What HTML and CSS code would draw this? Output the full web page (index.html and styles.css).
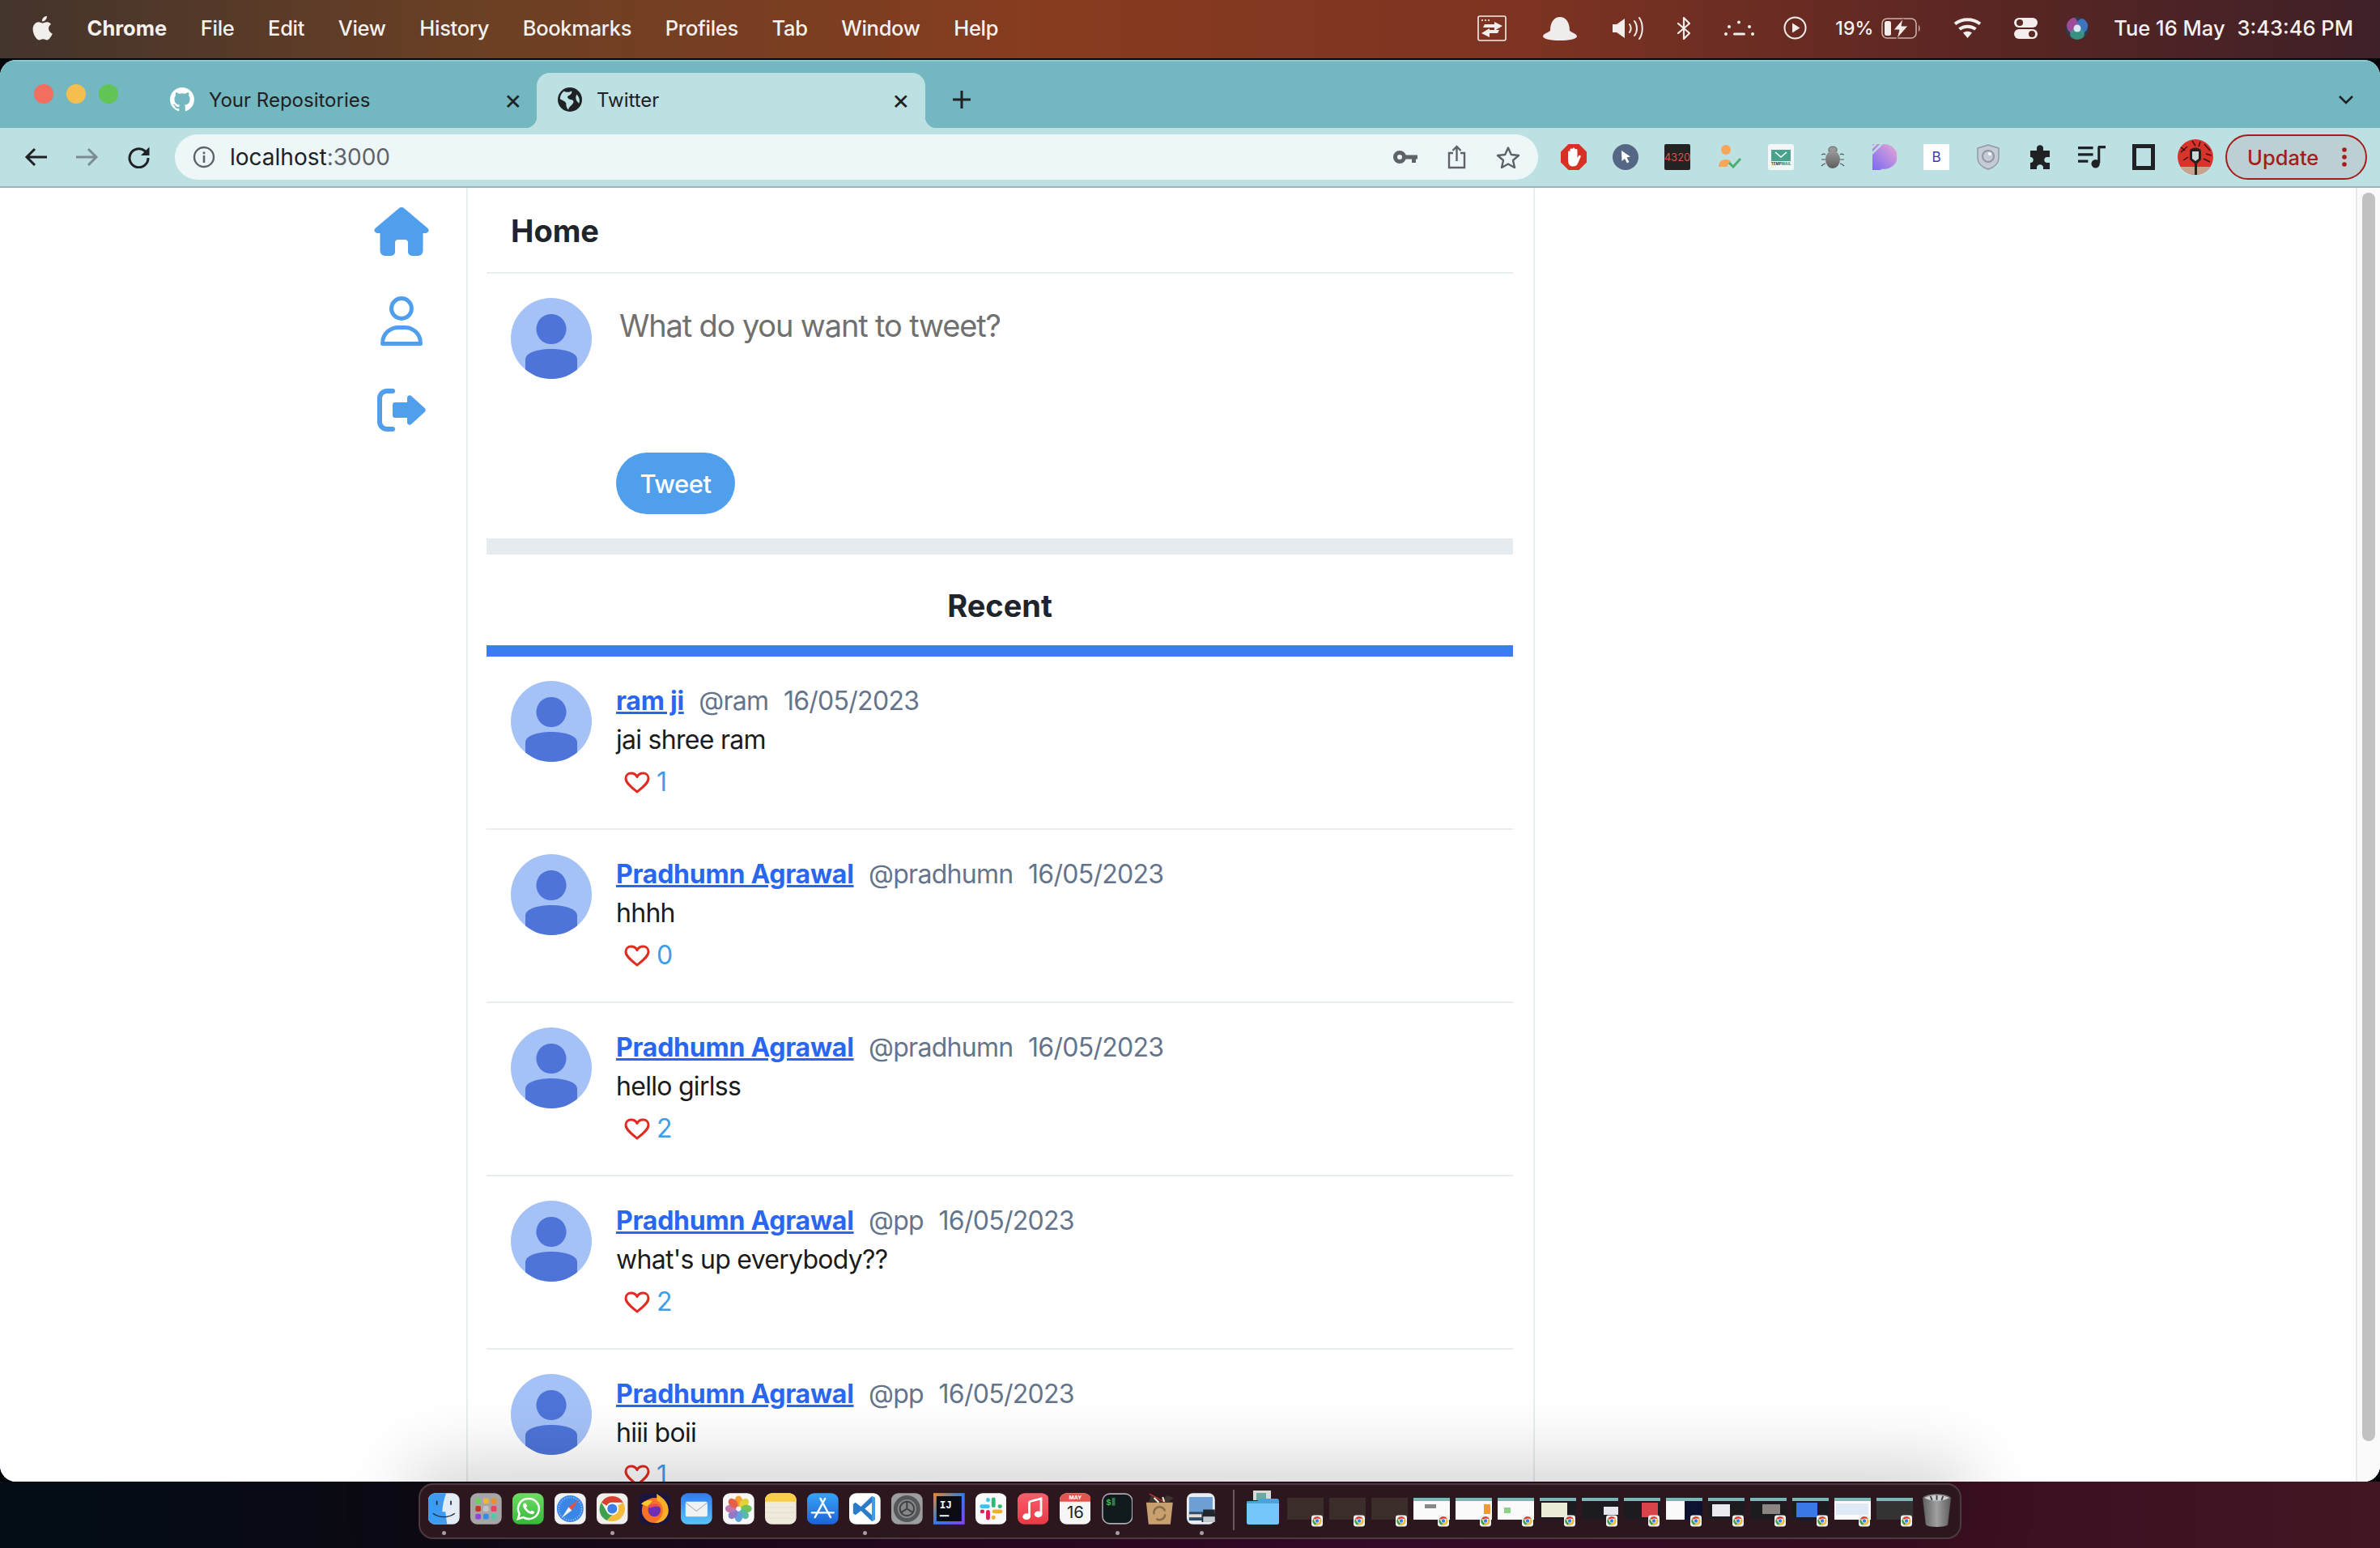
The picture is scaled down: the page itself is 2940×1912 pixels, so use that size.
FILE: index.html
```html
<!DOCTYPE html>
<html lang="en">
<head>
<meta charset="utf-8">
<title>Twitter</title>
<link rel="stylesheet" href="styles.css">
</head>
<body>
<svg class="sprite" aria-hidden="true">
  <defs>
    <clipPath id="av-clip"><circle cx="50" cy="50" r="50"/></clipPath>
    <clipPath id="siri-clip"><circle cx="14" cy="14" r="14"/></clipPath>
    <clipPath id="profile-clip"><circle cx="22" cy="22" r="22"/></clipPath>
    <linearGradient id="g-blue" x1="0" y1="0" x2="0" y2="1"><stop offset="0" stop-color="#2f7bf0"/><stop offset="1" stop-color="#5ac4fa"/></linearGradient>
    <linearGradient id="g-green" x1="0" y1="0" x2="0" y2="1"><stop offset="0" stop-color="#6fdc63"/><stop offset="1" stop-color="#35b83a"/></linearGradient>
    <linearGradient id="g-red" x1="0" y1="0" x2="0" y2="1"><stop offset="0" stop-color="#f4606c"/><stop offset="1" stop-color="#e83a45"/></linearGradient>
    <linearGradient id="g-store" x1="0" y1="0" x2="0" y2="1"><stop offset="0" stop-color="#37a3f5"/><stop offset="1" stop-color="#1c63d8"/></linearGradient>
    <linearGradient id="g-ij" x1="0" y1="0" x2="1" y2="1"><stop offset="0" stop-color="#f5871f"/><stop offset=".5" stop-color="#2b7fe8"/><stop offset="1" stop-color="#8a3ff0"/></linearGradient>
    <linearGradient id="g-p" x1="1" y1="0" x2="0" y2="1"><stop offset="0" stop-color="#eaa9d2"/><stop offset="1" stop-color="#7a68f5"/></linearGradient>
    <linearGradient id="g-bug" x1="0" y1="0" x2="0" y2="1"><stop offset="0" stop-color="#9a9a9a"/><stop offset="1" stop-color="#5e5e5e"/></linearGradient>
    <linearGradient id="g-trash" x1="0" y1="0" x2="1" y2="0"><stop offset="0" stop-color="#5f5f5f"/><stop offset=".5" stop-color="#a0a0a0"/><stop offset="1" stop-color="#5c5c5c"/></linearGradient>
    <symbol id="avatar" viewBox="0 0 100 100">
      <circle cx="50" cy="50" r="50" fill="#a5c2f7"/>
      <circle cx="50" cy="38.5" r="18.6" fill="#4e74d9"/>
      <path d="M18 76C18 68 32 63 50 63S82 68 82 76V100H18Z" fill="#4e74d9" clip-path="url(#av-clip)"/>
    </symbol>
    <symbol id="heart" viewBox="0 0 32 27">
      <path d="M16 25C10 20 2 14.500 2 8.500 2 4.500 5 2 8.500 2 11.500 2 14.500 3.500 16 6.500 17.500 3.500 20.500 2 23.500 2 27 2 30 4.500 30 8.500 30 14.500 22 20 16 25Z" fill="none" stroke="#e02b20" stroke-width="3" stroke-linejoin="round"/>
    </symbol>
    <symbol id="chrome" viewBox="0 0 40 40">
      <rect x="0" y="0" width="40" height="40" rx="9" fill="#f1efec"/>
      <path d="M20 4A16 16 0 0 1 33.900 12H20A8 8 0 0 0 13 16L6.100 12A16 16 0 0 1 20 4Z" fill="#d8402f"/>
      <path d="M6.100 12L13 24A8 8 0 0 0 20 28L13 35.000A16 16 0 0 1 6.100 12Z" fill="#3f9f4f"/>
      <path d="M33.900 12A16 16 0 0 1 20 36 16 16 0 0 1 13 35L20 28 27 24A8 8 0 0 0 27 16Z" fill="#f0bd3c"/>
      <circle cx="20" cy="20" r="8" fill="#fff"/><circle cx="20" cy="20" r="6.300" fill="#3d7fe8"/>
    </symbol>
  </defs>
</svg>

<header class="menubar">
  <nav class="menu">
    <svg class="apple" viewBox="0 0 22 28"><path d="M17 15.500C17 12.500 19.500 11.200 19.600 11.100 18.200 9.100 16 8.800 15.300 8.800 13.400 8.600 11.600 9.900 10.700 9.900 9.700 9.900 8.200 8.800 6.600 8.800 4.500 8.900 2.600 10.100 1.500 11.900-.7 15.700 1 21.300 3.100 24.400 4.200 25.900 5.400 27.600 7.100 27.500 8.700 27.500 9.300 26.500 11.200 26.500 13.100 26.500 13.600 27.500 15.300 27.500 17 27.400 18.100 26 19.100 24.400 20.400 22.700 20.900 20.900 21 20.800 20.900 20.800 17 19.300 17 15.500ZM13.800 6.400C14.700 5.300 15.300 3.900 15.100 2.400 13.900 2.500 12.300 3.200 11.400 4.300 10.600 5.200 9.900 6.700 10.100 8.100 11.500 8.200 12.900 7.400 13.800 6.400Z" fill="#f2eeec"/></svg>
    <span class="menu-app">Chrome</span>
    <span>File</span><span>Edit</span><span>View</span><span>History</span><span>Bookmarks</span><span>Profiles</span><span>Tab</span><span>Window</span><span>Help</span>
  </nav>
  <div class="status">
    <svg class="st-control" viewBox="0 0 36 32"><rect x="1" y="1" width="34" height="30" rx="2" fill="none" stroke="#f3eeec" stroke-width="1.600"/><circle cx="6" cy="6" r="1.100" fill="#f3eeec"/><circle cx="10" cy="6" r="1.100" fill="#f3eeec"/><circle cx="14" cy="6" r="1.100" fill="#f3eeec"/><path d="M21 11H9L7 15H21V19L31 13 21 8Z" fill="#f3eeec"/><path d="M15 18H27L25 22H15V27L5 22 15 16Z" fill="#f3eeec"/></svg>
    <svg class="st-hat" viewBox="0 0 42 30"><path d="M9 18C9 7 14 1 21 1S33 7 33 18C37 21 42 22 42 25 42 28 32 30 21 30S0 28 0 25C0 22 5 21 9 18Z" fill="#f0eceb"/></svg>
    <svg class="st-sound" viewBox="0 0 39 28"><path d="M0 9H5L15 2V26L5 19H0Z" fill="#f3eeec"/><path d="M21 9C23 12 23 16 21 19M27 5C31 10 31 18 27 23M33 1C38 8 38 20 33 27" fill="none" stroke="#f3eeec" stroke-width="2" stroke-linecap="round"/></svg>
    <svg class="st-bt" viewBox="0 0 19 28"><path d="M2 8L16 20 9 27V1L16 8 2 20" fill="none" stroke="#f3eeec" stroke-width="2.200" stroke-linejoin="round" stroke-linecap="round"/></svg>
    <svg class="st-dots" viewBox="0 0 37 20"><g fill="#f3eeec"><circle cx="18" cy="2.500" r="2"/><circle cx="6" cy="8" r="2"/><circle cx="31" cy="8" r="2"/><circle cx="2" cy="17" r="2"/><circle cx="35" cy="17" r="2"/><rect x="11" y="15.500" width="15" height="3" rx="1.500"/></g></svg>
    <svg class="st-play" viewBox="0 0 29 29"><circle cx="14.500" cy="14.500" r="13" fill="none" stroke="#f3eeec" stroke-width="2"/><path d="M11 8.500L20.500 14.500 11 20.500Z" fill="#f3eeec"/></svg>
    <span class="st-pct">19%</span>
    <svg class="st-batt" viewBox="0 0 49 26"><rect x="1" y="1" width="42" height="24" rx="6" fill="none" stroke="#c9b1a9" stroke-width="1.600"/><rect x="4" y="4" width="8" height="18" rx="2.500" fill="#f3eeec"/><path d="M46 9C48 10 48 16 46 17Z" fill="#c9b1a9"/><path d="M27 1L15 15H22L19 26 33 10H25Z" fill="#f3eeec" stroke="#6a2a22" stroke-width="1"/></svg>
    <svg class="st-wifi" viewBox="0 0 35 25"><path d="M17.500 25L12 18.500C15 16 20 16 23 18.500Z" fill="#f3eeec"/><path d="M7.500 14C13 9.500 22 9.500 27.500 14M2 7.500C10.500 0.500 24.500 0.500 33 7.500" fill="none" stroke="#f3eeec" stroke-width="4"/></svg>
    <svg class="st-cc" viewBox="0 0 29 26"><rect x="0" y="0" width="29" height="12" rx="6" fill="#f3eeec"/><circle cx="7" cy="6" r="4" fill="#5a2a25"/><rect x="0" y="14" width="29" height="12" rx="6" fill="#f3eeec"/><circle cx="22" cy="20" r="4" fill="#5a2a25"/></svg>
    <svg class="st-siri" viewBox="0 0 28 28"><g clip-path="url(#siri-clip)"><rect width="28" height="28" fill="#2f3a4d"/><ellipse cx="8" cy="10" rx="7" ry="10" fill="#b04fa8" opacity=".85"/><ellipse cx="20" cy="11" rx="7" ry="9" fill="#3f7fd0" opacity=".85"/><ellipse cx="14" cy="21" rx="9" ry="7" fill="#3aa08c" opacity=".85"/><circle cx="14" cy="14" r="4.500" fill="#dbe6f5"/></g></svg>
    <span class="st-date">Tue 16 May</span>
    <span class="st-time">3:43:46 PM</span>
  </div>
</header>

<main class="window">
  <div class="tabstrip">
    <div class="lights"><i class="light red"></i><i class="light yellow"></i><i class="light green"></i></div>
    <div class="tab">
      <svg class="favicon" viewBox="0 0 16 16"><path fill="#fff" d="M8 0C3.580 0 0 3.580 0 8c0 3.540 2.290 6.530 5.470 7.590.400.070.550-.170.550-.380 0-.190-.010-.820-.010-1.490-2.010.370-2.530-.490-2.690-.940-.090-.230-.480-.940-.820-1.130-.280-.150-.680-.520-.010-.530.630-.010 1.080.580 1.230.820.720 1.210 1.870.870 2.330.660.070-.520.280-.870.510-1.070-1.780-.200-3.640-.890-3.640-3.950 0-.870.310-1.590.820-2.150-.080-.200-.360-1.020.080-2.120 0 0 .670-.210 2.200.820.640-.180 1.320-.270 2-.270s1.360.090 2 .270c1.530-1.040 2.200-.820 2.200-.820.440 1.100.160 1.920.080 2.120.510.560.820 1.270.820 2.150 0 3.070-1.870 3.750-3.650 3.950.290.250.540.730.540 1.480 0 1.070-.010 1.930-.010 2.200 0 .210.150.460.550.380A8.010 8.010 0 0 0 16 8c0-4.420-3.580-8-8-8z"/></svg>
      <span class="tab-title">Your Repositories</span>
      <span class="tab-close">×</span>
    </div>
    <div class="tab tab-active">
      <svg class="favicon" viewBox="0 0 16 16"><circle cx="8" cy="8" r="8" fill="#202124"/><path d="M4 2.500C6 3.500 8 3 9 2.200 10 3.800 8 5 7 5.500 6 6.200 6.500 7.500 8 7.800 10 8 11 9 10 10.500 9 12 7 13 7 14.800 5.500 13 5.500 11.500 5.500 10.500 5 9 2.500 8.500 1.500 7.500 1.500 5.500 2.500 3.500 4 2.500Z" fill="#bde0e3"/><path d="M12.500 4.500C14 6 14.800 8.500 14 10.500 13 9.500 12 8.500 12 7.500 11.700 6.500 12 5.500 12.500 4.500Z" fill="#bde0e3"/></svg>
      <span class="tab-title">Twitter</span>
      <span class="tab-close">×</span>
    </div>
    <svg class="newtab" viewBox="0 0 24 24"><path d="M12 1V23M1 12H23" stroke="#202124" stroke-width="3"/></svg>
    <svg class="chevron" viewBox="0 0 20 12"><path d="M2 2L10 10 18 2" fill="none" stroke="#202124" stroke-width="2.600"/></svg>
  </div>

  <div class="toolbar">
    <div class="nav-buttons">
      <span class="nav-slot"><svg viewBox="0 0 28 24" class="nav-icon"><path d="M13 2L3 12 13 22M3 12H28" fill="none" stroke="#202124" stroke-width="3"/></svg></span>
      <span class="nav-slot"><svg viewBox="0 0 28 24" class="nav-icon"><path d="M15 2L25 12 15 22M25 12H0" fill="none" stroke="#7d8c90" stroke-width="3"/></svg></span>
      <span class="nav-slot"><svg viewBox="0 0 28 28" class="nav-icon nav-reload"><path d="M25 15A11.500 11.500 0 1 1 21 6.500L24.500 10" fill="none" stroke="#202124" stroke-width="3"/><path d="M26.500 1.500V12H16Z" fill="#202124"/></svg></span>
    </div>
    <div class="omnibox">
      <svg class="info" viewBox="0 0 28 28"><circle cx="14" cy="14" r="12" fill="none" stroke="#5f6368" stroke-width="2.400"/><rect x="12.700" y="12" width="2.600" height="9" fill="#5f6368"/><rect x="12.700" y="7.500" width="2.600" height="2.800" fill="#5f6368"/></svg>
      <span class="url">localhost<span class="url-port">:3000</span></span>
      <span class="omni-actions">
        <svg class="key" viewBox="0 0 30 20"><circle cx="8" cy="10" r="5.500" fill="none" stroke="#5f6368" stroke-width="5"/><path d="M13 7.500H30V12.500H28V17H23V12.500H13Z" fill="#5f6368"/></svg>
        <svg class="share" viewBox="0 0 23 30"><path d="M7 10H2V28H21V10H16" fill="none" stroke="#5f6368" stroke-width="2.400"/><path d="M11.500 20V2M6.500 7L11.500 2 16.500 7" fill="none" stroke="#5f6368" stroke-width="2.400"/></svg>
        <svg class="star" viewBox="0 0 30 28"><path d="M15 2.500L18.800 11 28 12 21 18 23 27 15 22.500 7 27 9 18 2 12 11.200 11Z" fill="none" stroke="#5f6368" stroke-width="2.400" stroke-linejoin="round"/></svg>
      </span>
    </div>
    <div class="extensions">
      <span class="ext"><svg viewBox="0 0 32 32"><path d="M9.500 0H22.500L32 9.500V22.500L22.500 32H9.500L0 22.500V9.500Z" fill="#d93025"/><path d="M9 19V10C9 8 11.500 8 11.500 10V15V7C11.500 5 14.500 5 14.500 7V15V6C14.500 4 17.500 4 17.500 6V15V7.500C17.500 5.500 20.500 5.500 20.500 7.500V17L22 14.500C23 13 25.500 14 24.500 16L21 24C20 26.500 18 27.500 15 27.500 11 27.500 9 25 9 19Z" fill="#fff"/></svg></span>
      <span class="ext"><svg viewBox="0 0 32 32"><circle cx="16" cy="16" r="16" fill="#546784"/><path d="M11 8L22 15.500 17.500 16.500 20.500 22 18 23.500 15 18 11.500 21Z" fill="#fff"/></svg></span>
      <span class="ext"><span class="ext-4320">4320</span></span>
      <span class="ext"><svg viewBox="0 0 32 32"><circle cx="12" cy="7" r="6" fill="#f5a65b"/><path d="M3 28C3 22 7 19 12 19 15 19 17 20 18 21L13 28Z" fill="#f5a65b"/><path d="M16 23L21 28 30 18" fill="none" stroke="#4caf6e" stroke-width="3"/></svg></span>
      <span class="ext"><span class="ext-temp"><svg viewBox="0 0 24 14"><rect width="24" height="14" fill="#48a28c"/><path d="M5 3L12 9 19 3" fill="none" stroke="#fff" stroke-width="1.600"/></svg><span class="temp-label">TEMP<b>MAIL</b></span></span></span>
      <span class="ext"><svg viewBox="0 0 30 32"><path d="M10 6C10 2 20 2 20 6V9H10Z" fill="#999" stroke="#666" stroke-width="1"/><ellipse cx="15" cy="19" rx="9" ry="11" fill="url(#g-bug)"/><path d="M6 13C3 11 3 13 1 13M6 19H1M6 24C4 24 3 25 1 27M24 13C27 11 27 13 29 13M24 19H29M24 24C26 24 27 25 29 27" fill="none" stroke="#555" stroke-width="1.200"/></svg></span>
      <span class="ext"><svg viewBox="0 0 26 27"><path d="M0 0H12C20 0 26 6 26 13S20 26 12 26H9V27H0Z" fill="url(#g-p)"/><path d="M0 8L8 0H11L0 11ZM0 2L2 0H5L0 5Z" fill="#bfe0e3"/></svg></span>
      <span class="ext"><span class="ext-b">B</span></span>
      <span class="ext"><svg viewBox="0 0 30 32"><path d="M15 1L28 5V16C28 24 22 29 15 31 8 29 2 24 2 16V5Z" fill="#c6ccd6" stroke="#8f97a6" stroke-width="1.500"/><circle cx="15" cy="15" r="7" fill="none" stroke="#8f97a6" stroke-width="2"/><circle cx="17" cy="12" r="2" fill="#fff"/></svg></span>
      <span class="ext"><svg viewBox="0 0 30 32"><path d="M11 5C11 0 19 0 19 5V8H27V16H24C19 16 19 23 24 23H27V31H19V29C19 24 11 24 11 29V31H3V23C8 23 8 16 3 16V8H11Z" fill="#202124"/></svg></span>
      <span class="ext"><svg viewBox="0 0 33 30"><path d="M0 4H18M0 12H18M0 20H12" stroke="#202124" stroke-width="3"/><path d="M25 3V22" stroke="#202124" stroke-width="3"/><path d="M24 3H33" stroke="#202124" stroke-width="3"/><circle cx="21" cy="23" r="5" fill="#202124"/></svg></span>
      <span class="ext"><svg viewBox="0 0 28 32"><rect x="2.500" y="2.500" width="23" height="27" fill="none" stroke="#202124" stroke-width="5"/></svg></span>
      <span class="ext"><svg class="profile" viewBox="0 0 44 44"><g clip-path="url(#profile-clip)"><rect width="44" height="44" fill="#d9342b"/><rect y="34" width="44" height="10" fill="#c9a38d"/><path d="M4 16L12 9M33 6L40 14M7 26L13 22M32 24L40 28M18 2L22 8M28 3L26 9M3 9L9 14M35 18L42 20" stroke="#3a1010" stroke-width="1.500"/><path d="M15 15C15 9 29 9 29 15V25L24 30V44H21V30L15 25Z" fill="#26201f"/><path d="M18 15H26V24L22 27 18 24Z" fill="#cfd8d8"/></g></svg></span>
    </div>
    <button class="update">
      <span class="update-text">Update</span>
      <svg class="update-dots" viewBox="0 0 6 24"><circle cx="3" cy="3" r="2.800" fill="#a51d1a"/><circle cx="3" cy="12" r="2.800" fill="#a51d1a"/><circle cx="3" cy="21" r="2.800" fill="#a51d1a"/></svg>
    </button>
  </div>

  <div class="viewport">
    <div class="page">
      <aside class="sidebar">
        <svg class="nav-home" viewBox="0 0 68 60"><path d="M30.500 1.500A5 5 0 0 1 37.500 1.500L66.500 26A3.500 3.500 0 0 1 64 32H60.500V54A6 6 0 0 1 54.500 60H47A5 5 0 0 1 42 55V44A4 4 0 0 0 38 40H30A4 4 0 0 0 26 44V55A5 5 0 0 1 21 60H13.500A6 6 0 0 1 7.500 54V32H4A3.500 3.500 0 0 1 1.500 26Z" fill="#4f9fec"/></svg>
        <svg class="nav-profile" viewBox="0 0 52 61"><circle cx="26" cy="15" r="12.500" fill="none" stroke="#4f9fec" stroke-width="5"/><path d="M2.500 58.500C2.500 45 13 38.500 22 38.500H30C39 38.500 49.500 45 49.500 58.500Z" fill="none" stroke="#4f9fec" stroke-width="5" stroke-linejoin="round"/></svg>
        <svg class="nav-logout" viewBox="0 0 60 53"><path d="M19 3H12A9 9 0 0 0 3 12V41A9 9 0 0 0 12 50H19" fill="none" stroke="#4f9fec" stroke-width="6" stroke-linecap="round"/><path d="M22 17H37V11A3 3 0 0 1 42 9L58.500 24A3.500 3.500 0 0 1 58.500 29L42 44A3 3 0 0 1 37 42V36H22A3 3 0 0 1 19 33V20A3 3 0 0 1 22 17Z" fill="#4f9fec"/></svg>
      </aside>

      <section class="feed">
        <div class="feed-inner">
          <h1 class="feed-title">Home</h1>
          <div class="composer">
            <svg class="avatar"><use href="#avatar"/></svg>
            <div class="composer-body">
              <div class="composer-input">What do you want to tweet?</div>
              <button class="tweet-button">Tweet</button>
            </div>
          </div>
          <div class="band"></div>
          <h2 class="recent">Recent</h2>

          <article class="tweet">
            <svg class="avatar"><use href="#avatar"/></svg>
            <div class="tweet-body">
              <div class="tweet-head"><a class="author">ram ji</a><span class="meta">@ram</span><span class="meta">16/05/2023</span></div>
              <p class="tweet-text">jai shree ram</p>
              <div class="likes"><svg class="heart"><use href="#heart"/></svg><span>1</span></div>
            </div>
          </article>
          <article class="tweet">
            <svg class="avatar"><use href="#avatar"/></svg>
            <div class="tweet-body">
              <div class="tweet-head"><a class="author">Pradhumn Agrawal</a><span class="meta">@pradhumn</span><span class="meta">16/05/2023</span></div>
              <p class="tweet-text">hhhh</p>
              <div class="likes"><svg class="heart"><use href="#heart"/></svg><span>0</span></div>
            </div>
          </article>
          <article class="tweet">
            <svg class="avatar"><use href="#avatar"/></svg>
            <div class="tweet-body">
              <div class="tweet-head"><a class="author">Pradhumn Agrawal</a><span class="meta">@pradhumn</span><span class="meta">16/05/2023</span></div>
              <p class="tweet-text">hello girlss</p>
              <div class="likes"><svg class="heart"><use href="#heart"/></svg><span>2</span></div>
            </div>
          </article>
          <article class="tweet">
            <svg class="avatar"><use href="#avatar"/></svg>
            <div class="tweet-body">
              <div class="tweet-head"><a class="author">Pradhumn Agrawal</a><span class="meta">@pp</span><span class="meta">16/05/2023</span></div>
              <p class="tweet-text">what's up everybody??</p>
              <div class="likes"><svg class="heart"><use href="#heart"/></svg><span>2</span></div>
            </div>
          </article>
          <article class="tweet">
            <svg class="avatar"><use href="#avatar"/></svg>
            <div class="tweet-body">
              <div class="tweet-head"><a class="author">Pradhumn Agrawal</a><span class="meta">@pp</span><span class="meta">16/05/2023</span></div>
              <p class="tweet-text">hiii boii</p>
              <div class="likes"><svg class="heart"><use href="#heart"/></svg><span>1</span></div>
            </div>
          </article>
        </div>
      </section>
      <div class="right-col"></div>
    </div>
    <div class="scrollbar"><div class="scroll-thumb"></div></div>
  </div>
</main>

<footer class="dock-area">
  <div class="dock">
    <div class="app"><svg viewBox="0 0 40 40"><rect width="40" height="40" rx="9" fill="#e3ecf5"/><path d="M9 0H23C20 8 18 16 18 24H22L24 40H9A9 9 0 0 1 0 31V9A9 9 0 0 1 9 0Z" fill="#3d9cf2"/><path d="M11 10V15M29 10V15" stroke="#1b2a3c" stroke-width="1.800"/><path d="M6 26C14 32 26 32 34 26" fill="none" stroke="#1b2a3c" stroke-width="1.400"/></svg><i class="dot"></i></div>
    <div class="app"><svg viewBox="0 0 40 40"><rect width="40" height="40" rx="9" fill="#a6a6a6"/><g><rect x="6.500" y="6.500" width="7" height="7" rx="2" fill="#6fcf57"/><rect x="16.500" y="6.500" width="7" height="7" rx="2" fill="#f2b434"/><rect x="26.500" y="6.500" width="7" height="7" rx="2" fill="#ee8f2e"/><rect x="6.500" y="16.500" width="7" height="7" rx="2" fill="#c9352b"/><rect x="16.500" y="16.500" width="7" height="7" rx="2" fill="#c0c4c6"/><rect x="26.500" y="16.500" width="7" height="7" rx="2" fill="#e6445f"/><rect x="6.500" y="26.500" width="7" height="7" rx="2" fill="#9146d9"/><rect x="16.500" y="26.500" width="7" height="7" rx="2" fill="#2f8df0"/><rect x="26.500" y="26.500" width="7" height="7" rx="2" fill="#52c9a8"/></g></svg></div>
    <div class="app"><svg viewBox="0 0 40 40"><rect width="40" height="40" rx="9" fill="url(#g-green)"/><path d="M20 7A13 13 0 0 0 9 26.500L7 33 14 31A13 13 0 1 0 20 7Z" fill="none" stroke="#fff" stroke-width="2.600"/><path d="M15 13C13 14 13 17 15 20 17.500 24 21 26.500 25 27 27 27 28 25.500 28 24L24.500 22 23 23.500C21 23 18 20 17.500 18L19 16.500 17 13Z" fill="#fff"/></svg></div>
    <div class="app"><svg viewBox="0 0 40 40"><rect width="40" height="40" rx="9" fill="#f0f1f3"/><circle cx="20" cy="20" r="17" fill="#3a86e6"/><circle cx="20" cy="20" r="14.500" fill="none" stroke="#9cc6f2" stroke-width="2" stroke-dasharray="1 2"/><path d="M31 8L22 22 18 18Z" fill="#e8503f"/><path d="M9 32L18 18 22 22Z" fill="#f4f6f8"/></svg></div>
    <div class="app"><svg viewBox="0 0 40 40"><use href="#chrome"/></svg><i class="dot"></i></div>
    <div class="app"><svg viewBox="0 0 40 40"><rect width="40" height="40" rx="9" fill="#1a1440"/><circle cx="20" cy="22" r="16" fill="#f7712a"/><path d="M23 1C28 5 37 9 38 21 39 30 31 39 20 38 33 33 35 16 23 9Z" fill="#fbae27"/><path d="M3 14C7 9 13 8 18 10L11 17Z" fill="#f9c82c"/><circle cx="20" cy="22" r="8" fill="#6e2fb5"/><path d="M12 16C17 13 24 13 28 18 23 16.500 18 17 15 19Z" fill="#f04a58"/></svg></div>
    <div class="app"><svg viewBox="0 0 40 40"><rect width="40" height="40" rx="9" fill="url(#g-blue)"/><rect x="6" y="11" width="28" height="19" rx="2" fill="#f0f2f4"/><path d="M6 12L20 23 34 12" fill="none" stroke="#b7bcc2" stroke-width="1.200"/></svg></div>
    <div class="app"><svg viewBox="0 0 40 40"><rect width="40" height="40" rx="9" fill="#f7f7f7"/><g class="petals"><ellipse cx="20" cy="10.500" rx="5" ry="7" fill="#f4a02f"/><ellipse cx="27" cy="13" rx="5" ry="7" fill="#e3d13a" transform="rotate(45 27 13)"/><ellipse cx="30" cy="20" rx="7" ry="5" fill="#75c25a"/><ellipse cx="27" cy="27" rx="5" ry="7" fill="#57b9a8" transform="rotate(-45 27 27)"/><ellipse cx="20" cy="30" rx="5" ry="7" fill="#5ea1dc"/><ellipse cx="13" cy="27" rx="5" ry="7" fill="#8d7bc9" transform="rotate(45 13 27)"/><ellipse cx="10" cy="20" rx="7" ry="5" fill="#c078b0"/><ellipse cx="13" cy="13" rx="5" ry="7" fill="#e4604c" transform="rotate(-45 13 13)"/></g></svg></div>
    <div class="app"><svg viewBox="0 0 40 40"><rect width="40" height="40" rx="9" fill="#efeadc"/><path d="M0 11V9A9 9 0 0 1 9 0H31A9 9 0 0 1 40 9V11Z" fill="#f8cf46"/><path d="M0 18H40M0 25H40M0 32H40" stroke="#ddd8ca" stroke-width=".6"/></svg></div>
    <div class="app"><svg viewBox="0 0 40 40"><rect width="40" height="40" rx="9" fill="url(#g-store)"/><path d="M23 7L10 31M17 7L30 31M6 25H34" stroke="#fff" stroke-width="2.400" stroke-linecap="round"/></svg></div>
    <div class="app"><svg viewBox="0 0 40 40"><rect width="40" height="40" rx="9" fill="#fff"/><path d="M29 4L33 6V34L29 36 15 22.500 8 28 5 26V14L8 12 15 17.500ZM29 12L20 20 29 28Z" fill="#2a7bc8"/><path d="M29 4L33 6V34L29 36Z" fill="#3f9de3"/></svg><i class="dot"></i></div>
    <div class="app"><svg viewBox="0 0 40 40"><rect width="40" height="40" rx="9" fill="#9b9d9e"/><circle cx="20" cy="20" r="17" fill="#55575a"/><circle cx="20" cy="20" r="12" fill="#85888b"/><circle cx="20" cy="20" r="9" fill="none" stroke="#3d3f42" stroke-width="2"/><path d="M20 11V20L28 25M20 20L12 25" stroke="#3d3f42" stroke-width="2" fill="none"/></svg></div>
    <div class="app"><svg viewBox="0 0 40 40"><rect width="40" height="40" fill="url(#g-ij)"/><rect x="4" y="4" width="32" height="32" fill="#0b0b12"/><text x="8" y="19" class="ij">IJ</text><rect x="8" y="28" width="12" height="2" fill="#fff"/></svg></div>
    <div class="app"><svg viewBox="0 0 40 40"><rect width="40" height="40" rx="9" fill="#f9f9f9"/><g stroke-width="5" stroke-linecap="round" fill="none"><path d="M8 17H16" stroke="#36c5f0"/><path d="M16 8.500V9" stroke="#36c5f0"/><path d="M23 8V16" stroke="#2eb67d"/><path d="M31.500 17H31" stroke="#2eb67d"/><path d="M24 23.500H32" stroke="#ecb22e"/><path d="M23 31.500V31" stroke="#ecb22e"/><path d="M16 24V32" stroke="#e01e5a"/><path d="M8.500 23.500H9" stroke="#e01e5a"/></g></svg></div>
    <div class="app"><svg viewBox="0 0 40 40"><rect width="40" height="40" rx="9" fill="url(#g-red)"/><path d="M15 11L30 7V27" fill="none" stroke="#fff" stroke-width="2.800"/><path d="M15 11V30" stroke="#fff" stroke-width="2.800"/><ellipse cx="11.500" cy="30" rx="5" ry="4" fill="#fff"/><ellipse cx="26.500" cy="27" rx="5" ry="4" fill="#fff"/></svg></div>
    <div class="app"><svg viewBox="0 0 40 40"><rect width="40" height="40" rx="9" fill="#f6f6f6"/><path d="M0 11V9A9 9 0 0 1 9 0H31A9 9 0 0 1 40 9V11Z" fill="#e4544c"/><text x="20" y="8.500" class="cal-month">MAY</text><text x="20" y="32" class="cal-day">16</text></svg></div>
    <div class="app"><svg viewBox="0 0 40 40"><rect x="1" y="1" width="38" height="38" rx="9" fill="#111a1c" stroke="#a8adb0" stroke-width="1.600"/><text x="5.500" y="15" class="term">$</text><rect x="13" y="6" width="4" height="10" fill="#2f7d4f"/></svg><i class="dot"></i></div>
    <div class="app"><svg viewBox="0 0 40 40"><path d="M3 12L6 40H34L37 12Z" fill="#c8a070"/><path d="M6 12L10 1 14 12ZM15 12L9 3 27 12ZM20 12L30 3 38 6 31 12Z" fill="#3a3432"/><path d="M7 1L28 12" stroke="#c3352b" stroke-width="1.400"/><path d="M13 6L19 12M24 5L26 11" stroke="#efe6c8" stroke-width="2.200"/><path d="M13 27A7 7 0 0 1 27 23M27 27A7 7 0 0 1 16 33" fill="none" stroke="#8a6b48" stroke-width="2.600"/></svg></div>
    <div class="app"><svg viewBox="0 0 40 40"><rect x="1" width="36" height="40" rx="8" fill="#e9eef4"/><rect x="4" y="5" width="30" height="30" fill="#6d9fd4"/><rect x="4" y="24" width="30" height="11" fill="#2d4a6a"/><rect x="4" y="27" width="16" height="4" fill="#e8ddd0"/><path d="M22 21H37V25L39 37H20L22 25Z" fill="#22252a"/><path d="M22 30H37V37H22Z" fill="#c5cbd1"/></svg><i class="dot"></i></div>
    <span class="dock-sep"></span>
    <div class="app folder"><svg viewBox="0 0 42 42"><rect x="9" y="0" width="22" height="12" fill="#d8dad6"/><rect x="13" y="3" width="12" height="9" fill="#6fa8a0"/><path d="M2 13H14L18 10H38A3 3 0 0 1 41 13V39A3 3 0 0 1 38 42H4A3 3 0 0 1 1 39V14Z" fill="#48a5dc"/><path d="M1 16H41V39A3 3 0 0 1 38 42H4A3 3 0 0 1 1 39Z" fill="#74c6fb"/></svg></div>
    <div class="thumb thumb-blank"><svg class="badge"><use href="#chrome"/></svg></div>
    <div class="thumb thumb-blank"><svg class="badge"><use href="#chrome"/></svg></div>
    <div class="thumb thumb-blank"><svg class="badge"><use href="#chrome"/></svg></div>
    <div class="thumb thumb-light"><i class="tb-a"></i><svg class="badge"><use href="#chrome"/></svg></div>
    <div class="thumb thumb-light"><i class="tb-b"></i><svg class="badge"><use href="#chrome"/></svg></div>
    <div class="thumb thumb-light"><i class="tb-c"></i><svg class="badge"><use href="#chrome"/></svg></div>
    <div class="thumb thumb-dark"><i class="tb-d"></i><svg class="badge"><use href="#chrome"/></svg></div>
    <div class="thumb thumb-dark"><i class="tb-e"></i><svg class="badge"><use href="#chrome"/></svg></div>
    <div class="thumb thumb-dark"><i class="tb-f"></i><svg class="badge"><use href="#chrome"/></svg></div>
    <div class="thumb thumb-light"><i class="tb-g"></i><svg class="badge"><use href="#chrome"/></svg></div>
    <div class="thumb thumb-dark"><i class="tb-h"></i><svg class="badge"><use href="#chrome"/></svg></div>
    <div class="thumb thumb-dark"><i class="tb-i"></i><svg class="badge"><use href="#chrome"/></svg></div>
    <div class="thumb thumb-dark"><i class="tb-j"></i><svg class="badge"><use href="#chrome"/></svg></div>
    <div class="thumb thumb-light"><i class="tb-k"></i><svg class="badge"><use href="#chrome"/></svg></div>
    <div class="thumb thumb-grey"><svg class="badge"><use href="#chrome"/></svg></div>
    <div class="app trash"><svg viewBox="0 0 36 44"><path d="M0 6C4 0 32 0 36 6L32 40C30 44 6 44 4 40Z" fill="url(#g-trash)"/><path d="M2 6C10 2 26 2 34 6 26 11 10 11 2 6Z" fill="#cfd2d4"/><path d="M10 4L12 9M18 3L18 9M26 4L24 9" stroke="#444" stroke-width="2"/></svg></div>
  </div>
</footer>
</body>
</html>
```

FILE: styles.css
```css
* { box-sizing: border-box; }
html, body { margin: 0; padding: 0; }
body {
  width: 2940px;
  height: 1912px;
  overflow: hidden;
  display: flex;
  flex-direction: column;
  background: #02060a;
  font-family: "Inter", "Liberation Sans", sans-serif;
}
.sprite { display: block; width: 0; height: 0; }

/* macOS menu bar */
.menubar {
  flex: none;
  height: 72px;
  margin-bottom: 2px;
  padding: 0 33px 3px 40px;
  display: flex;
  align-items: center;
  justify-content: space-between;
  color: #f5f1ef;
  font-size: 25.500px;
  font-weight: 500;
  background: linear-gradient(90deg, #43342c 0, #6c4024 600px, #873c1f 1300px, #7c3322 1900px, #5d2723 2400px, #3e2027 2940px);
}
.menu { display: flex; align-items: center; gap: 41.600px; letter-spacing: -.3px; }
.apple { width: 26px; height: 33px; margin-top: -3px; }
.menu-app { font-weight: 700; letter-spacing: 0; }
.status { display: flex; align-items: center; }
.st-control { width: 36px; height: 32px; }
.st-hat { width: 42px; height: 30px; margin-left: 45px; }
.st-sound { width: 39px; height: 28px; margin-left: 44px; }
.st-bt { width: 19px; height: 28px; margin-left: 40px; }
.st-dots { width: 37px; height: 20px; margin-left: 40px; }
.st-play { width: 29px; height: 29px; margin-left: 36px; }
.st-pct { margin-left: 35px; font-size: 23px; }
.st-batt { width: 49px; height: 26px; margin-left: 10px; }
.st-wifi { width: 35px; height: 25px; margin-left: 40px; }
.st-cc { width: 29px; height: 26px; margin-left: 40px; }
.st-siri { width: 28px; height: 28px; margin-left: 35px; }
.st-date { margin-left: 31px; }
.st-time { margin-left: 15px; }

/* browser window */
.window {
  flex: none;
  height: 1756px;
  display: flex;
  flex-direction: column;
  border-radius: 20px;
  overflow: hidden;
  background: #fff;
}
.tabstrip {
  flex: none;
  height: 84px;
  padding-top: 14px;
  display: flex;
  align-items: stretch;
  background: #73b7c0;
  border-top: 2px solid #8cc8cf;
}
.lights { width: 184px; padding: 14px 0 0 42px; display: flex; gap: 16px; }
.light { width: 24px; height: 24px; border-radius: 50%; }
.red { background: #f46e60; }
.yellow { background: #f5bf4f; }
.green { background: #61c454; }
.tab {
  position: relative;
  width: 480px;
  height: 68px;
  padding: 0 19px 2px 26px;
  display: flex;
  align-items: center;
  font-size: 24px;
  color: #202124;
}
.tab-active {
  width: 480px;
  margin-left: -1px;
  background: #bde0e3;
  border-radius: 16px 16px 0 0;
}
.tab-active::before, .tab-active::after {
  content: "";
  position: absolute;
  bottom: 0;
  width: 14px;
  height: 14px;
}
.tab-active::before { left: -14px; background: radial-gradient(circle at 0 0, transparent 14px, #bde0e3 14.500px); }
.tab-active::after { right: -14px; background: radial-gradient(circle at 100% 0, transparent 14px, #bde0e3 14.500px); }
.favicon { width: 30px; height: 30px; flex: none; }
.tab-title { margin-left: 18px; flex: 1; }
.tab-close { font-size: 34px; line-height: 1; font-weight: 400; }
.newtab { width: 24px; height: 24px; margin: 21px 0 0 33px; }
.chevron { width: 20px; height: 12px; margin: 27px 32px 0 auto; }

.toolbar {
  flex: none;
  height: 74px;
  display: flex;
  align-items: center;
  padding: 0 16px 0 12px;
  background: #bde0e3;
  border-bottom: 2px solid #9db6b9;
}
.nav-buttons { display: flex; width: 192px; margin-right: 12px; }
.nav-slot { width: 64px; height: 28px; display: flex; align-items: center; justify-content: center; }
.nav-icon { width: 28px; height: 24px; }
.nav-reload { height: 28px; }
.omnibox {
  flex: 1;
  height: 56px;
  display: flex;
  align-items: center;
  padding: 0 22px;
  border-radius: 28px;
  background: #edf7f8;
}
.info { width: 28px; height: 28px; flex: none; }
.url { margin-left: 18px; font-size: 28px; color: #202124; }
.url-port { color: #5f6368; }
.omni-actions { margin-left: auto; display: flex; align-items: center; gap: 37px; }
.key { width: 30px; height: 20px; }
.share { width: 23px; height: 30px; }
.star { width: 30px; height: 28px; }
.extensions { display: flex; margin-left: 12px; }
.ext { width: 64px; height: 32px; display: flex; justify-content: center; align-items: center; }
.ext svg { height: 32px; max-width: 34px; }
.ext .profile { width: 44px; height: 44px; max-width: none; flex: none; }
.ext-4320 {
  width: 32px; height: 32px;
  display: flex; align-items: center; justify-content: center;
  border-radius: 2px;
  background: #232323;
  color: #d9534a;
  font-size: 13px;
}
.ext-temp {
  width: 32px; height: 32px;
  padding: 7px 4px 2px;
  display: flex; flex-direction: column; align-items: center;
  border-radius: 3px;
  background: #f3f7f7;
}
.ext-temp svg { width: 24px; height: 14px; }
.temp-label { font-size: 4.500px; font-weight: 700; color: #333; margin-top: 2px; line-height: 1; }
.temp-label b { color: #48a28c; }
.ext-b {
  width: 32px; height: 32px;
  display: flex; align-items: center; justify-content: center;
  background: #fff;
  color: #3a3bb5;
  font-size: 17px;
}
.update {
  width: 175px;
  height: 56px;
  margin-left: 5px;
  padding: 0 23px 0 25px;
  display: flex;
  align-items: center;
  justify-content: space-between;
  border: 2px solid #a51d1a;
  border-radius: 28px;
  background: #bcd0d4;
  color: #a51d1a;
  font: 500 25.500px "Inter", "Liberation Sans", sans-serif;
}
.update-dots { width: 6px; height: 24px; }

/* page */
.viewport { flex: 1; min-height: 0; display: flex; background: #fff; }
.page {
  flex: 1;
  min-width: 0;
  display: grid;
  grid-template-columns: 576px 1320px 1fr;
  overflow: hidden;
}
.sidebar { display: flex; flex-direction: column; align-items: flex-start; padding: 24px 0 0 416px; }
.nav-home { width: 68px; height: 60px; margin-left: 46px; }
.nav-profile { width: 52px; height: 61px; margin: 50px 0 0 54px; }
.nav-logout { width: 60px; height: 53px; margin: 53px 0 0 50px; }
.feed { border-left: 2px solid #e8edf0; border-right: 2px solid #e8edf0; padding: 0 25px 0 23px; }
.feed-inner { display: flex; flex-direction: column; }
.feed-title {
  margin: 0;
  height: 106px;
  padding: 30px 0 0 30px;
  border-bottom: 2px solid #e8edf0;
  font-size: 38px;
  line-height: 46px;
  font-weight: 700;
  color: #20252b;
}
.composer { display: flex; gap: 30px; padding: 30px 30px 0; height: 327px; }
.avatar { width: 100px; height: 100px; flex: none; }
.composer-body { flex: 1; display: flex; flex-direction: column; align-items: flex-start; }
.composer-input {
  height: 191px;
  padding: 11px 0 0 4px;
  font-size: 38px;
  line-height: 46px;
  letter-spacing: -1.150px;
  color: #707070;
}
.tweet-button {
  width: 147px;
  height: 76px;
  border: 0;
  border-radius: 38px;
  background: #4f9fec;
  color: #fff;
  font: 500 31px "Inter", "Liberation Sans", sans-serif;
  letter-spacing: -.5px;
}
.band { height: 20px; background: #e6ebef; }
.recent {
  margin: 0;
  height: 126px;
  padding-top: 40px;
  text-align: center;
  border-bottom: 14px solid #3b7cf0;
  font-size: 38px;
  line-height: 46px;
  font-weight: 700;
  color: #20252b;
}
.tweet {
  height: 214px;
  flex: none;
  display: flex;
  gap: 30px;
  padding: 30px 30px 0;
  border-bottom: 2px solid #e8edf0;
}
.tweet-body { flex: 1; padding-top: 2px; }
.tweet-head { display: flex; gap: 18.500px; font-size: 32px; line-height: 46px; }
.author { color: #2a66f0; font-weight: 700; text-decoration: underline; letter-spacing: -.25px; }
.meta { color: #64748b; letter-spacing: -.72px; }
.tweet-text { margin: 2px 0 0; font-size: 32px; line-height: 46px; letter-spacing: -.72px; color: #1b1b1b; }
.likes {
  display: flex;
  align-items: center;
  padding: 6px 0 0 10px;
  font-size: 32px;
  line-height: 46px;
  color: #3f9de8;
}
.heart { width: 32px; height: 27px; margin-right: 8px; }
.right-col { background: #fff; }
.scrollbar {
  flex: none;
  width: 30px;
  padding: 6px 6px 0 6px;
  border-left: 2px solid #e8e8e8;
  background: #fafafa;
}
.scroll-thumb { height: 1542px; border-radius: 8px; background: #c1c1c1; }

/* dock */
.dock-area {
  position: relative;
  z-index: 2;
  flex: 1;
  min-height: 0;
  display: flex;
  justify-content: center;
  padding-top: 2px;
  background: linear-gradient(90deg, #020d14 0, #0c0a14 480px, #2a0722 1200px, #3a0a2c 1700px, #3a0d22 2300px, #421622 2940px);
}
.dock {
  width: 1906px;
  height: 69px;
  padding: 10px 12px 0 10px;
  display: flex;
  align-items: flex-start;
  gap: 13.300px;
  border: 2px solid #4b3a3e;
  border-radius: 18px;
  background: #2c171e;
  box-shadow: 0 -10px 90px 10px rgba(0, 0, 0, .2);
}
.app { position: relative; width: 38.700px; height: 40px; flex: none; }
.app svg { display: block; width: 38.700px; height: 39px; }
.dot {
  position: absolute;
  left: 17px;
  top: 47px;
  width: 5px;
  height: 5px;
  border-radius: 50%;
  background: #a79ca0;
}
.ij { font: 700 13px "Liberation Mono", monospace; fill: #fff; }
.cal-month { font: 700 7px "Inter", sans-serif; fill: #fff; text-anchor: middle; }
.cal-day { font: 400 21px "Inter", sans-serif; fill: #222; text-anchor: middle; }
.term { font: 700 11px "Liberation Mono", monospace; fill: #39c24a; }
.dock-sep { width: 2px; height: 50px; flex: none; margin: -4px 1px 0 6px; background: #6a5a5e; }
.folder { width: 42px; height: 42px; margin: -3px -4px 0 0; }
.folder svg { width: 42px; height: 42px; }
.thumb {
  position: relative;
  flex: none;
  width: 45px;
  height: 27px;
  margin-top: 6px;
  margin-right: -6.300px;
  border-top: 4px solid #7cb7b8;
}
.thumb-blank { background: #3b2e2a; border-top: 0; }
.thumb-light { background: #fafafa; }
.thumb-dark { background: #1c1c20; }
.thumb-grey { background: #333; }
.thumb i { display: block; }
.badge { position: absolute; right: 1px; top: 17px; width: 14px; height: 15px; }
.thumb-blank .badge { top: 21px; }
.tb-a { width: 14px; height: 5px; margin: 4px 0 0 14px; background: #888; }
.tb-b { width: 8px; height: 12px; margin: 4px 0 0 35px; background: #ee9a3a; }
.tb-c { width: 8px; height: 7px; margin: 8px 0 0 8px; background: #8ed28a; }
.tb-d { width: 32px; height: 18px; margin: 2px 0 0 2px; background: #ecebd5; }
.tb-e { width: 18px; height: 10px; margin: 7px 0 0 27px; background: #e6e8ef; }
.tb-f { width: 20px; height: 18px; margin: 2px 0 0 22px; background: #d9434a; }
.tb-g { width: 22px; height: 23px; margin: 0 0 0 23px; background: #0c1230; }
.tb-h { width: 22px; height: 15px; margin: 4px 0 0 5px; background: #e9e9ef; }
.tb-i { width: 22px; height: 12px; margin: 4px 0 0 15px; background: #8a8580; }
.tb-j { width: 26px; height: 18px; margin: 2px 0 0 5px; background: #3a78e8; }
.tb-k { width: 40px; height: 14px; margin: 3px 0 0 2px; background: #dfe9f5; }
.trash { width: 35px; height: 43px; margin-left: 5px; }
.trash svg { width: 35px; height: 43px; }
```
